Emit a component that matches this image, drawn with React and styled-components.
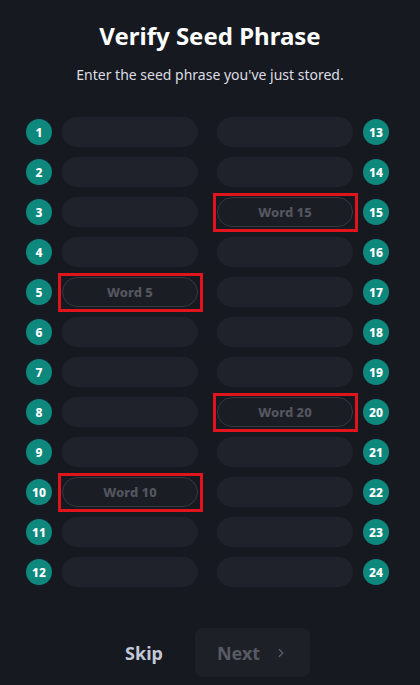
import React from 'react'
import styled, { createGlobalStyle } from 'styled-components'
import { ChevronRight } from 'lucide-react'

const GlobalStyle = createGlobalStyle`
    body {
        margin: 0;
        background: #171921;
        font-family: "Noto Sans", "Open Sans", sans-serif;
    }
`;

const Page = styled.div`
    height: 685px;
    display: flex;
    flex-direction: column;
    align-items: center;
    box-sizing: border-box;
    padding-top: 19px;
`;

const Title = styled.h1`
    margin: 0;
    font-size: 24px;
    font-weight: 700;
    line-height: 34px;
    color: #ffffff;
`;

const Subtitle = styled.p`
    margin: 13px 0 0;
    font-size: 14px;
    line-height: 18px;
    color: #dcdde2;
`;

const Grid = styled.div`
    margin-top: 33px;
    margin-right: 5px;
    display: grid;
    grid-template-columns: 172px 172px;
    grid-template-rows: repeat(12, 30px);
    grid-auto-flow: column;
    column-gap: 19px;
    row-gap: 10px;
`;

const Row = styled.div`
    display: flex;
    align-items: center;
    gap: 10px;
    flex-direction: ${p => (p.$right ? 'row-reverse' : 'row')};
`;

const Badge = styled.span`
    flex: 0 0 26px;
    height: 26px;
    border-radius: 50%;
    background: #0e877d;
    color: #ffffff;
    font-size: 12px;
    font-weight: 800;
    display: flex;
    align-items: center;
    justify-content: center;
`;

const Input = styled.div`
    position: relative;
    flex: 1;
    height: 30px;
    box-sizing: border-box;
    border-radius: 15px;
    display: flex;
    align-items: center;
    justify-content: center;
    font-size: 13px;
    font-weight: 800;
    color: #54565f;
    background: ${p => (p.$hint ? '#1b1d25' : '#20222b')};
    border: 1px solid ${p => (p.$hint ? '#363842' : 'transparent')};

    &::after {
        content: '';
        display: ${p => (p.$hint ? 'block' : 'none')};
        position: absolute;
        left: -5px;
        right: -6px;
        top: -5px;
        bottom: -6px;
        border: 3px solid #e0141c;
    }
`;

const Footer = styled.div`
    margin-top: auto;
    margin-bottom: 8px;
    display: flex;
    align-items: center;
    gap: 17px;
`;

const SkipButton = styled.button`
    width: 68px;
    height: 49px;
    padding: 0;
    border: none;
    background: transparent;
    font-family: inherit;
    font-size: 18px;
    font-weight: 700;
    color: #c3c8d6;
`;

const NextButton = styled.button`
    width: 115px;
    height: 49px;
    border: none;
    border-radius: 8px;
    background: #1e2028;
    font-family: inherit;
    font-size: 18px;
    font-weight: 700;
    color: #575a63;
    display: flex;
    align-items: center;
    justify-content: center;
    gap: 14px;
`;

const hints = { 5: 'Word 5', 10: 'Word 10', 15: 'Word 15', 20: 'Word 20' };

export default function App() {
    const words = Array.from({ length: 24 }, (_, i) => i + 1);
    return (
        <>
            <GlobalStyle />
            <Page>
                <Title>Verify Seed Phrase</Title>
                <Subtitle>Enter the seed phrase you've just stored.</Subtitle>
                <Grid>
                    {words.map(n => (
                        <Row key={n} $right={n > 12}>
                            <Badge>{n}</Badge>
                            <Input $hint={!!hints[n]}>{hints[n]}</Input>
                        </Row>
                    ))}
                </Grid>
                <Footer>
                    <SkipButton>Skip</SkipButton>
                    <NextButton>
                        Next
                        <ChevronRight size={14} strokeWidth={2.5} />
                    </NextButton>
                </Footer>
            </Page>
        </>
    );
}
